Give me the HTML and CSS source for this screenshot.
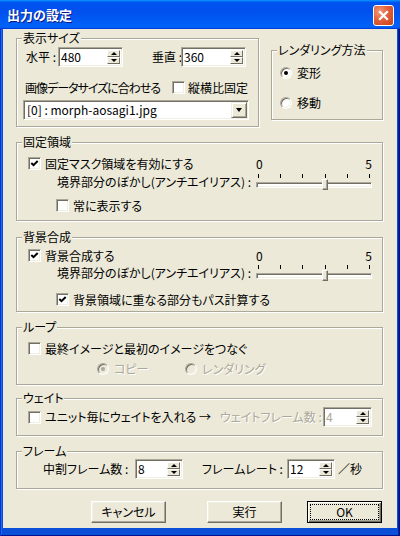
FILE: index.html
```html
<!DOCTYPE html>
<html lang="ja">
<head>
<meta charset="utf-8">
<title>出力の設定</title>
<link rel="stylesheet" href="styles.css">
</head>
<body>
<div class="window">
  <div class="titlebar">
    <span class="title">出力の設定</span>
    <span class="close-btn"><svg width="11" height="11" viewBox="0 0 11 11"><path d="M1.2 1.2L9.8 9.8M9.8 1.2L1.2 9.8" stroke="#fff" stroke-width="2.3" fill="none"/></svg></span>
  </div>
  <div class="frame">
    <div class="client">
      <div class="top-row">
        <div class="group g-size">
          <div class="legend">表示サイズ</div>
          <div class="row size-row">
            <span class="lbl lbl-h">水平 :</span>
            <div class="spin w-size"><span class="spin-val">480</span><span class="spin-btns"><span class="sb up"></span><span class="sb down"></span></span></div>
            <span class="lbl lbl-v">垂直 :</span>
            <div class="spin w-size"><span class="spin-val">360</span><span class="spin-btns"><span class="sb up"></span><span class="sb down"></span></span></div>
          </div>
          <div class="row fit-row">
            <span class="fit-text">画像データサイズに合わせる</span>
            <span class="cb"></span>
            <span class="cb-text tight">縦横比固定</span>
          </div>
          <div class="combo"><span class="combo-val">[0] : morph-aosagi1.jpg</span><span class="combo-btn"></span></div>
        </div>
        <div class="group g-render">
          <div class="legend">レンダリング方法</div>
          <div class="row rrow rrow-1"><span class="rb on"></span><span class="rb-text">変形</span></div>
          <div class="row rrow rrow-2"><span class="rb"></span><span class="rb-text">移動</span></div>
        </div>
      </div>

      <div class="group g-fixed">
        <div class="legend">固定領域</div>
        <div class="row cbrow-a fx-r1">
          <span class="cb"><svg class="chk" width="9" height="9" viewBox="0 0 9 9"><polyline points="1.3,4 3.5,6.2 7.7,2" stroke="#000" stroke-width="2" fill="none"/></svg></span>
          <span class="cb-text">固定マスク領域を有効にする</span>
          <div class="scale"><span>0</span><span>5</span></div>
        </div>
        <div class="row slider-row fx-r2">
          <span class="slider-lbl">境界部分のぼかし(アンチエイリアス) :</span>
          <div class="slider" style="--pos:3">
            <div class="ticks"><i></i><i></i><i></i><i></i><i></i><i></i></div>
            <div class="track"></div>
            <span class="thumb"></span>
          </div>
        </div>
        <div class="row cbrow-b fx-r3">
          <span class="cb"></span><span class="cb-text">常に表示する</span>
        </div>
      </div>

      <div class="group g-bg">
        <div class="legend">背景合成</div>
        <div class="row cbrow-a bg-r1">
          <span class="cb"><svg class="chk" width="9" height="9" viewBox="0 0 9 9"><polyline points="1.3,4 3.5,6.2 7.7,2" stroke="#000" stroke-width="2" fill="none"/></svg></span>
          <span class="cb-text">背景合成する</span>
          <div class="scale"><span>0</span><span>5</span></div>
        </div>
        <div class="row slider-row bg-r2">
          <span class="slider-lbl">境界部分のぼかし(アンチエイリアス) :</span>
          <div class="slider" style="--pos:3">
            <div class="ticks"><i></i><i></i><i></i><i></i><i></i><i></i></div>
            <div class="track"></div>
            <span class="thumb"></span>
          </div>
        </div>
        <div class="row cbrow-b bg-r3">
          <span class="cb"><svg class="chk" width="9" height="9" viewBox="0 0 9 9"><polyline points="1.3,4 3.5,6.2 7.7,2" stroke="#000" stroke-width="2" fill="none"/></svg></span>
          <span class="cb-text">背景領域に重なる部分もパス計算する</span>
        </div>
      </div>

      <div class="group g-loop">
        <div class="legend">ループ</div>
        <div class="row cbrow-a lp-r1">
          <span class="cb"></span><span class="cb-text">最終イメージと最初のイメージをつなぐ</span>
        </div>
        <div class="row lp-r2">
          <span class="ritem ritem-first"><span class="rb dis on"></span><span class="rb-text dis">コピー</span></span>
          <span class="ritem"><span class="rb dis"></span><span class="rb-text dis">レンダリング</span></span>
        </div>
      </div>

      <div class="group g-wait">
        <div class="legend">ウェイト</div>
        <div class="row cbrow-a wt-r1">
          <span class="wt-check"><span class="cb"></span><span class="cb-text">ユニット毎にウェイトを入れる →</span></span>
          <span class="lbl wt-lbl dis">ウェイトフレーム数 :</span>
          <div class="spin w-wait"><span class="spin-val dis-val">4</span><span class="spin-btns"><span class="sb up"></span><span class="sb down"></span></span></div>
        </div>
      </div>

      <div class="group g-frame">
        <div class="legend">フレーム</div>
        <div class="row fr-r1">
          <span class="lbl fr-lbl1">中割フレーム数 :</span>
          <div class="spin w-frame"><span class="spin-val">8</span><span class="spin-btns"><span class="sb up"></span><span class="sb down"></span></span></div>
          <span class="lbl fr-lbl2">フレームレート :</span>
          <div class="spin w-frame"><span class="spin-val">12</span><span class="spin-btns"><span class="sb up"></span><span class="sb down"></span></span></div>
          <span class="lbl fr-unit">／秒</span>
        </div>
      </div>

      <div class="btn-row">
        <span class="btn btn-cancel">キャンセル</span>
        <span class="btn btn-run">実行</span>
        <span class="btn btn-ok">OK</span>
      </div>
    </div>
  </div>
</div>
</body>
</html>
```
FILE: styles.css
```css
* { box-sizing: border-box; margin: 0; padding: 0; }
html, body { width: 400px; height: 536px; overflow: hidden; }
body {
  font-family: "Noto Sans CJK JP", "Noto Sans", sans-serif;
  font-size: 12px;
  line-height: 14px;
  font-feature-settings: "palt" 1;
  color: #000;
  background: #ECE9D8;
}
.window { width: 400px; height: 536px; display: flex; flex-direction: column; }

/* title bar */
.titlebar {
  flex: none; height: 29px;
  display: flex; align-items: flex-start; justify-content: space-between;
  padding: 0 6px 0 7px;
  background: linear-gradient(180deg, #0997ff, #0053ee 8%, #0050ee 40%, #0060f8 85%, #0062f9 92%, #005bef 95%, #0040e0 97%, #003cda);
}
.title {
  margin-top: 6px;
  color: #fff; font-weight: bold; font-size: 13px; line-height: 17px;
  font-feature-settings: normal;
  text-shadow: 1px 1px #0a1883;
}
.close-btn {
  margin-top: 5px;
  width: 21px; height: 21px;
  display: flex; align-items: center; justify-content: center;
  border: 1px solid #fff; border-radius: 3px;
  background: radial-gradient(circle at 30% 30%, #f39a7a 0%, #e2603a 45%, #c8401a 100%);
}

/* frame & client */
.frame {
  flex: 1; display: flex;
  padding: 0 3px 8px 3px;
  background: #0a4fd8;
  box-shadow: inset 1px 0 #0831d9, inset -1px 0 #00138c, inset 0 -1px #00138c, inset 2px 0 #166aee, inset -2px 0 #001ea0;
}
.client {
  flex: 1; background: #ECE9D8;
  display: flex; flex-direction: column; align-items: flex-start;
  padding-left: 13px;
}

/* group boxes */
.group {
  flex: none; display: flex; flex-direction: column; align-items: stretch;
  border: 1px solid #ACA899;
  box-shadow: inset 1px 1px #fff, 1px 1px #fff;
}
.legend {
  align-self: flex-start;
  margin: -8px 0 0 5px; padding: 0 1px;
  height: 14px; line-height: 14px;
  background: #ECE9D8; white-space: nowrap;
}
.row { flex: none; display: flex; align-items: center; white-space: nowrap; }

.top-row { flex: none; display: flex; align-items: flex-start; margin-top: 9px; }
.g-size { width: 243px; height: 89px; }
.g-render { width: 112px; height: 70px; margin: 12px 0 0 12px; }
.g-fixed { width: 367px; height: 79px; margin-top: 15px; }
.g-bg { width: 367px; height: 75px; margin-top: 16px; }
.g-loop { width: 367px; height: 58px; margin-top: 15px; }
.g-wait { width: 367px; height: 38px; margin-top: 13px; }
.g-frame { width: 367px; height: 38px; margin-top: 15px; }

/* size group */
.size-row { margin-top: 2px; height: 20px; padding-left: 9px; }
.lbl { flex: none; white-space: nowrap; }
.lbl-h { width: 32px; }
.lbl-v { width: 29px; margin-left: 29px; }
.w-size { width: 65px; }
.fit-row { margin-top: 14px; height: 13px; padding-left: 8px; }
.fit-text { flex: none; width: 147px; letter-spacing: -1px; }
.combo {
  flex: none; width: 226px; height: 20px; margin: 6px 0 0 6px;
  display: flex; align-items: center;
  background: #fff;
  border: 1px solid; border-color: #ACA899 #fff #fff #ACA899;
  box-shadow: inset 1px 1px #716F64, inset -1px -1px #F1EFE2;
  padding: 0 1px 0 3px;
}
.combo-val { flex: 1; white-space: nowrap; }
.combo-btn {
  flex: none; width: 16px; height: 16px;
  display: flex; align-items: center; justify-content: center;
  background: #ECE9D8;
  border: 1px solid; border-color: #F1EFE2 #716F64 #716F64 #F1EFE2;
  box-shadow: inset 1px 1px #fff, inset -1px -1px #ACA899;
}
.combo-btn::after {
  content: ""; width: 0; height: 0;
  border-left: 3.5px solid transparent; border-right: 3.5px solid transparent;
  border-top: 4px solid #000;
}

/* render group */
.rrow { height: 14px; padding-left: 8px; }
.rrow-1 { margin-top: 9px; }
.rrow-2 { margin-top: 16px; }
.rb {
  flex: none; width: 12px; height: 12px; border-radius: 50%;
  background: #fff;
  border: 1px solid; border-color: #ACA899 #fff #fff #ACA899;
  box-shadow: inset 1px 1px #716F64, inset -1px -1px #F1EFE2;
  display: flex; align-items: center; justify-content: center;
}
.rb.on::after { content: ""; width: 4px; height: 4px; border-radius: 50%; background: #000; }
.rb.dis { background: #ECE9D8; }
.rb.dis.on::after { background: #ACA899; }
.rb-text { margin-left: 5px; }

/* checkbox */
.cb {
  flex: none; width: 13px; height: 13px;
  background: #fff;
  border: 1px solid; border-color: #ACA899 #fff #fff #ACA899;
  box-shadow: inset 1px 1px #716F64, inset -1px -1px #F1EFE2;
  display: flex; align-items: center; justify-content: center;
}
.chk { display: block; }
.cb-text { margin-left: 4px; }
.cb-text.tight { margin-left: 3px; }
.cbrow-a { height: 13px; padding-left: 11px; }
.cbrow-b { height: 13px; padding-left: 39px; }

/* slider */
.scale {
  flex: none; width: 116px; margin-left: auto; margin-right: 10px;
  display: flex; justify-content: space-between;
}
.slider-row { height: 17px; padding-left: 40px; }
.slider-lbl { flex: none; }
.slider {
  position: relative; flex: none; width: 116px; height: 17px;
  margin-left: auto; margin-right: 10px;
}
.ticks { display: flex; justify-content: space-between; margin: 1px 2px 0; height: 4px; }
.ticks i { display: block; width: 1px; height: 4px; background: #000; }
.track {
  margin-top: 4px; height: 6px; background: #fff;
  border: 1px solid; border-color: #ACA899 #fff #fff #ACA899;
  box-shadow: inset 1px 1px #716F64, inset -1px -1px #F1EFE2;
}
.thumb {
  position: absolute; top: 6px;
  left: calc(var(--pos) * 22.2px - 1px);
  width: 6px; height: 11px;
  background: #ECE9D8;
  border: 1px solid; border-color: #fff #716F64 #716F64 #fff;
  box-shadow: inset -1px -1px #ACA899;
  border-radius: 1px 1px 0 0;
}

.fx-r1 { margin-top: 8px; }
.fx-r2 { margin-top: 3px; }
.fx-r3 { margin-top: 9px; }
.bg-r1 { margin-top: 5px; }
.bg-r2 { margin-top: 2px; }
.bg-r3 { margin-top: 12px; }

/* loop */
.lp-r1 { margin-top: 8px; }
.lp-r2 { margin-top: 7px; height: 14px; padding-left: 80px; }
.ritem { display: flex; align-items: center; }
.ritem-first { width: 88px; }
.dis { color: #ACA899; text-shadow: 1px 1px #fff; }

/* spin boxes */
.spin {
  flex: none; height: 20px;
  display: flex; align-items: center;
  background: #fff;
  border: 1px solid; border-color: #ACA899 #fff #fff #ACA899;
  box-shadow: inset 1px 1px #716F64, inset -1px -1px #F1EFE2;
  padding: 0 2px 0 2px;
}
.spin-val { flex: 1; line-height: 14px; }
.dis-val { color: #ACA899; }
.spin-btns { flex: none; width: 13px; height: 14px; display: flex; flex-direction: column; }
.sb {
  flex: 1; display: flex; align-items: center; justify-content: center;
  background: #ECE9D8;
  border: 1px solid; border-color: #fff #716F64 #716F64 #fff;
}
.sb.up::after {
  content: ""; width: 0; height: 0;
  border-left: 3px solid transparent; border-right: 3px solid transparent;
  border-bottom: 3px solid #000;
}
.sb.down::after {
  content: ""; width: 0; height: 0;
  border-left: 3px solid transparent; border-right: 3px solid transparent;
  border-top: 3px solid #000;
}

/* wait */
.wt-r1 { margin-top: 2px; height: 20px; }
.wt-check { flex: none; width: 192px; display: flex; align-items: center; }
.wt-lbl { width: 103px; }
.w-wait { width: 49px; }

/* frame */
.fr-r1 { margin-top: 1px; height: 20px; padding-left: 26px; }
.fr-lbl1 { width: 92px; }
.w-frame { width: 48px; }
.fr-lbl2 { width: 85px; margin-left: 19px; }
.fr-unit { margin-left: 3px; }

/* buttons */
.btn-row { flex: none; display: flex; margin-top: 12px; }
.btn {
  flex: none; width: 75px; height: 22px;
  display: flex; align-items: center; justify-content: center;
  background: #ECE9D8;
  border: 1px solid; border-color: #fff #716F64 #716F64 #fff;
  box-shadow: inset -1px -1px #ACA899, inset 1px 1px #F1EFE2;
}
.btn-cancel { margin-left: 75px; }
.btn-run { margin-left: 41px; }
.btn-ok {
  margin-left: 25px;
  border-color: #000;
  box-shadow: inset 1px 1px #fff, inset -1px -1px #716F64, inset -2px -2px #ACA899;
  outline: 1px dotted #000; outline-offset: -4px;
}
```
